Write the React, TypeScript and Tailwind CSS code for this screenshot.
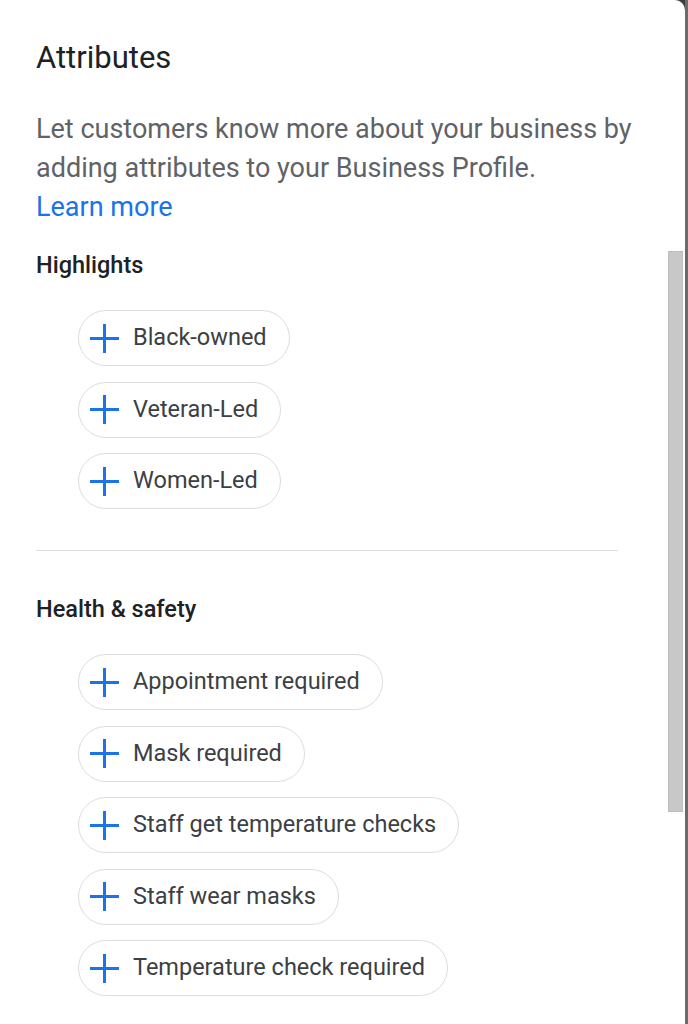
const highlights = ['Black-owned', 'Veteran-Led', 'Women-Led']
const health = [
  'Appointment required',
  'Mask required',
  'Staff get temperature checks',
  'Staff wear masks',
  'Temperature check required',
]

function Chip({ label }: { label: string }) {
  return (
    <button className="flex h-[56px] items-center gap-[13px] self-start rounded-full border border-[#dadce0] bg-white pl-[10px] pr-[22px] text-[23.5px] text-[#3c4043]">
      <svg width="31" height="31" viewBox="0 0 31 31" aria-hidden="true">
        <path d="M1 15.5h29M15.5 1v29" stroke="#1a73e8" strokeWidth="3" />
      </svg>
      <span>{label}</span>
    </button>
  )
}

function Section({ title, items }: { title: string; items: string[] }) {
  return (
    <section>
      <h2 className="text-[23.5px] font-medium leading-[30px] text-[#202124]">{title}</h2>
      <div className="mt-[30px] flex flex-col gap-[15.5px] pl-[42px]">
        {items.map((item) => (
          <Chip key={item} label={item} />
        ))}
      </div>
    </section>
  )
}

export default function App() {
  return (
    <div className="flex h-[1024px] w-[688px] overflow-hidden bg-[#3c3c3c] font-['Roboto',sans-serif]">
      <div className="flex flex-1 rounded-tr-[10px] bg-white">
        <main className="flex-1 pl-[36px] pr-[20px] pt-[38px]">
          <h1 className="text-[31px] leading-[40px] text-[#202124]">Attributes</h1>
          <p className="mt-[32px] text-[27px] leading-[39px] text-[#5f6368]">
            Let customers know more about your business by adding attributes to your Business Profile.
          </p>
          <a href="#" className="block text-[27px] leading-[39px] text-[#1a73e8]">
            Learn more
          </a>
          <div className="mt-[23px]">
            <Section title="Highlights" items={highlights} />
          </div>
          <hr className="mr-[30px] mt-[41px] border-t border-[#dadce0]" />
          <div className="mt-[43px]">
            <Section title="Health & safety" items={health} />
          </div>
        </main>
        <div className="w-[17px] pt-[251px]">
          <div className="h-[561px] w-[15px] border border-[#bdbdbd] bg-[#c8c8c8]" />
        </div>
      </div>
      <div className="w-[3px] bg-[#6b6b6b]" />
    </div>
  )
}
